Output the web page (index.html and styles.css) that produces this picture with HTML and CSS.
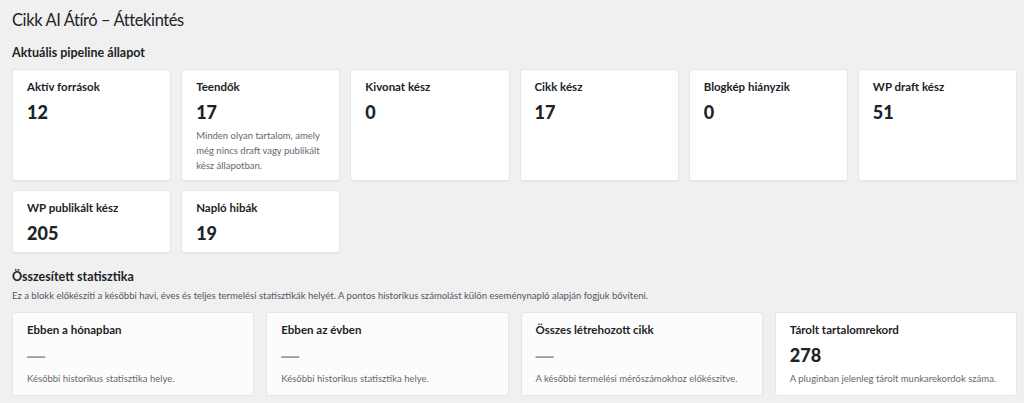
FILE: index.html
```html
<!DOCTYPE html>
<html lang="hu">
<head>
<meta charset="utf-8">
<title>Cikk AI Átíró – Áttekintés</title>
<link rel="stylesheet" href="styles.css">
</head>
<body>
<div class="wrap">
  <h1 class="page-title">Cikk AI Átíró – Áttekintés</h1>

  <h2 class="section-title">Aktuális pipeline állapot</h2>
  <div class="stat-grid">
    <div class="stat-card">
      <div class="stat-label">Aktív források</div>
      <div class="stat-value">12</div>
    </div>
    <div class="stat-card">
      <div class="stat-label">Teendők</div>
      <div class="stat-value">17</div>
      <p class="stat-note">Minden olyan tartalom, amely még nincs draft vagy publikált kész állapotban.</p>
    </div>
    <div class="stat-card">
      <div class="stat-label">Kivonat kész</div>
      <div class="stat-value">0</div>
    </div>
    <div class="stat-card">
      <div class="stat-label">Cikk kész</div>
      <div class="stat-value">17</div>
    </div>
    <div class="stat-card">
      <div class="stat-label">Blogkép hiányzik</div>
      <div class="stat-value">0</div>
    </div>
    <div class="stat-card">
      <div class="stat-label">WP draft kész</div>
      <div class="stat-value">51</div>
    </div>
    <div class="stat-card">
      <div class="stat-label">WP publikált kész</div>
      <div class="stat-value">205</div>
    </div>
    <div class="stat-card">
      <div class="stat-label">Napló hibák</div>
      <div class="stat-value">19</div>
    </div>
  </div>

  <h2 class="section-title section-title--spaced">Összesített statisztika</h2>
  <p class="section-desc">Ez a blokk előkészíti a későbbi havi, éves és teljes termelési statisztikák helyét. A pontos historikus számolást külön eseménynapló alapján fogjuk bővíteni.</p>
  <div class="summary-grid">
    <div class="stat-card stat-card--summary stat-card--muted">
      <div class="stat-label">Ebben a hónapban</div>
      <div class="stat-value stat-value--empty">—</div>
      <p class="stat-note">Későbbi historikus statisztika helye.</p>
    </div>
    <div class="stat-card stat-card--summary stat-card--muted">
      <div class="stat-label">Ebben az évben</div>
      <div class="stat-value stat-value--empty">—</div>
      <p class="stat-note">Későbbi historikus statisztika helye.</p>
    </div>
    <div class="stat-card stat-card--summary stat-card--muted">
      <div class="stat-label">Összes létrehozott cikk</div>
      <div class="stat-value stat-value--empty">—</div>
      <p class="stat-note">A későbbi termelési mérőszámokhoz előkészítve.</p>
    </div>
    <div class="stat-card stat-card--summary">
      <div class="stat-label">Tárolt tartalomrekord</div>
      <div class="stat-value">278</div>
      <p class="stat-note">A pluginban jelenleg tárolt munkarekordok száma.</p>
    </div>
  </div>
</div>
</body>
</html>
```

FILE: styles.css
```css
html, body {
  margin: 0;
  padding: 0;
}

body {
  background: #f0f0f1;
  color: #1d2327;
  font-family: Lato, "Open Sans", "Liberation Sans", sans-serif;
  font-size: 13px;
}

.wrap {
  padding: 0 7px 0 12px;
}

.page-title {
  margin: 0;
  padding: 8px 0 0;
  font-size: 16.5px;
  font-weight: 400;
  letter-spacing: -0.4px;
  line-height: 24px;
  color: #1d2327;
}

.section-title {
  margin: 12px 0 0;
  font-size: 12.5px;
  font-weight: 700;
  line-height: 18px;
}

.section-title--spaced {
  margin-top: 15px;
}

.section-desc {
  margin: 2px 0 0;
  font-size: 9.5px;
  line-height: 15px;
  color: #50575e;
}

.stat-grid {
  display: grid;
  grid-template-columns: repeat(6, 1fr);
  gap: 9px 10px;
  margin-top: 7px;
}

.summary-grid {
  display: grid;
  grid-template-columns: repeat(4, 1fr);
  gap: 12px;
  margin-top: 9px;
}

.stat-card {
  background: #fff;
  border: 1px solid #e4e5e7;
  border-radius: 3px;
  padding: 8px 14px 7px;
  box-shadow: 0 1px 1px rgba(0, 0, 0, 0.03);
}

.stat-card--summary {
  padding-bottom: 9px;
}

.stat-card--muted {
  background: #fcfcfc;
}

.stat-label {
  font-size: 11.5px;
  font-weight: 700;
  line-height: 18px;
  color: #1d2327;
}

.stat-value {
  margin-top: 4px;
  font-size: 18px;
  font-weight: 900;
  line-height: 24px;
  color: #1d2327;
}

/* placeholder dash for metrics not collected yet */
.stat-value--empty {
  font-family: "Liberation Sans", Arial, sans-serif;
  font-weight: 700;
  color: #9a9da2;
  padding-top: 2px;
  line-height: 22px;
}

.stat-note {
  margin: 4px 0 0;
  font-size: 9.5px;
  line-height: 15px;
  color: #646970;
}
```
